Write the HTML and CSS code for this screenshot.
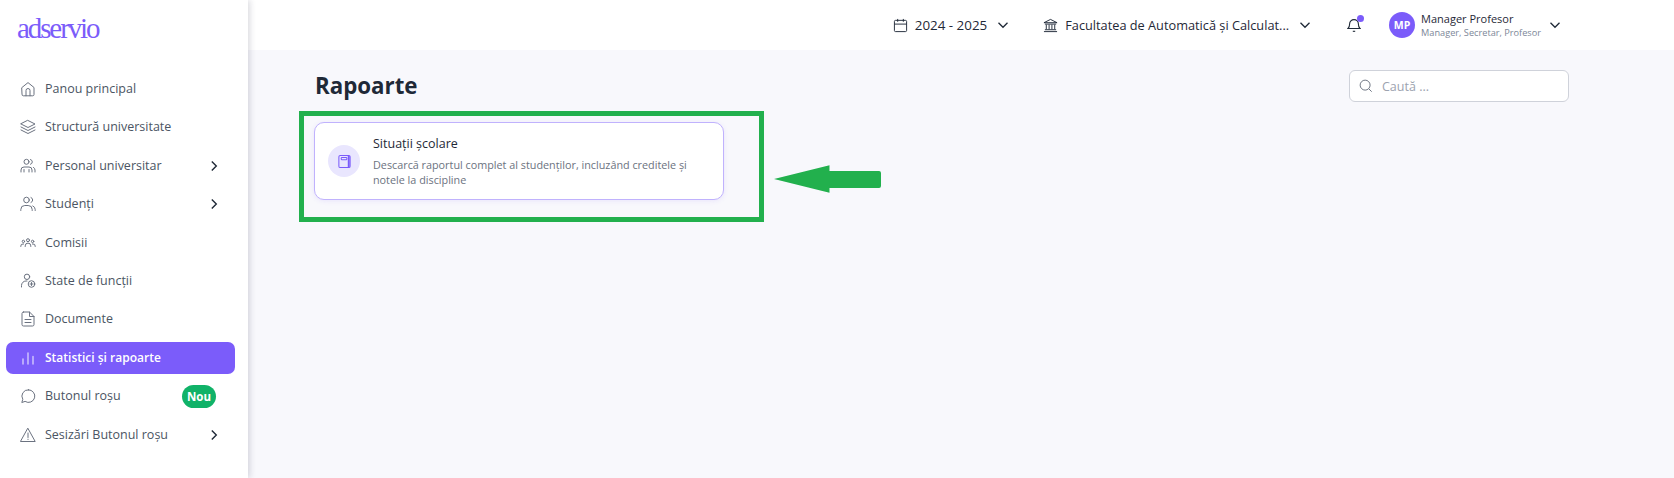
FILE: index.html
```html
<!DOCTYPE html>
<html lang="ro">
<head>
  <meta charset="UTF-8">
  <meta name="viewport" content="width=device-width, initial-scale=1.0">
  <title>Rapoarte</title>
  <link rel="stylesheet" href="styles.css">
</head>
<body>
  <div class="layout">
    <aside class="sidebar">
      <div class="logo">adservio</div>
      <nav class="nav">
        <a class="nav-item">
          <svg class="nav-icon" viewBox="0 0 16 16"><path d="M2 6.500 8 1.600l6 4.900v7a1.300 1.300 0 0 1-1.300 1.300H3.300A1.300 1.300 0 0 1 2 13.500z"/><path d="M6 14.800V9.500a2 2 0 0 1 4 0v5.300"/></svg>
          <span class="nav-label">Panou principal</span>
        </a>
        <a class="nav-item">
          <svg class="nav-icon" viewBox="0 0 16 16"><path d="M8 1.500 15 5 8 8.500 1 5z"/><path d="M1 8l7 3.500L15 8"/><path d="M1 11l7 3.500 7-3.500"/></svg>
          <span class="nav-label">Structură universitate</span>
        </a>
        <a class="nav-item">
          <svg class="nav-icon" viewBox="0 0 16 16"><circle cx="6.500" cy="3.800" r="2.500"/><path d="M10.500 1.500a2.500 2.500 0 0 1 0 4.800"/><path d="M1 14v-2a3 3 0 0 1 3-3h5a3 3 0 0 1 3 3v2"/><path d="M15 14v-2a3 3 0 0 0-1.500-2.600"/><path d="M4 11.500V14M9 11.500V14"/></svg>
          <span class="nav-label">Personal universitar</span>
          <svg class="nav-chevron" viewBox="0 0 8 12"><path d="M1.800 1.500 6.300 6l-4.500 4.500"/></svg>
        </a>
        <a class="nav-item">
          <svg class="nav-icon" viewBox="0 0 16 16"><circle cx="6.500" cy="4" r="2.800"/><path d="M11 1.500a2.700 2.700 0 0 1 0 5"/><path d="M.8 14.500v-1a4 4 0 0 1 4-4h3.400a4 4 0 0 1 4 4v1"/><path d="M15.200 14.500v-1a4 4 0 0 0-2.400-3.600"/></svg>
          <span class="nav-label">Studenți</span>
          <svg class="nav-chevron" viewBox="0 0 8 12"><path d="M1.800 1.500 6.300 6l-4.500 4.500"/></svg>
        </a>
        <a class="nav-item">
          <svg class="nav-icon" viewBox="0 0 16 16"><circle cx="8" cy="5.200" r="1.500"/><circle cx="3.400" cy="6.400" r="1.200"/><circle cx="12.600" cy="6.400" r="1.200"/><path d="M5.200 11.500v-.6a2.800 2.800 0 0 1 5.600 0v.6"/><path d="M.8 11.500v-.4A2.100 2.100 0 0 1 3 9h.6"/><path d="M15.200 11.500v-.4A2.100 2.100 0 0 0 13 9h-.6"/></svg>
          <span class="nav-label">Comisii</span>
        </a>
        <a class="nav-item">
          <svg class="nav-icon" viewBox="0 0 16 16"><circle cx="7" cy="3.800" r="2.700"/><path d="M1.500 14v-1.500A4.500 4.500 0 0 1 6 8h1"/><circle cx="11.500" cy="11" r="3.300"/><path d="M11.500 9.500v3M10 11h3"/></svg>
          <span class="nav-label">State de funcții</span>
        </a>
        <a class="nav-item">
          <svg class="nav-icon" viewBox="0 0 16 16"><path d="M3.500 1h6L14 5.500v8A1.500 1.500 0 0 1 12.500 15h-9A1.500 1.500 0 0 1 2 13.500v-11A1.500 1.500 0 0 1 3.500 1z"/><path d="M9.500 1v4.500H14"/><path d="M5 8.500h6M5 11.500h6"/></svg>
          <span class="nav-label">Documente</span>
        </a>
        <a class="nav-item active">
          <svg class="nav-icon" viewBox="0 0 16 16"><path d="M3 14V9M8 14V3M13 14V6.500"/></svg>
          <span class="nav-label">Statistici și rapoarte</span>
        </a>
        <a class="nav-item">
          <svg class="nav-icon" viewBox="0 0 16 16"><path d="M8.500 1.800a6.300 6.300 0 1 1-3.400 11.600L1.800 14.500l1-3.200A6.300 6.300 0 0 1 8.500 1.800z"/></svg>
          <span class="nav-label">Butonul roșu</span>
          <span class="badge">Nou</span>
        </a>
        <a class="nav-item">
          <svg class="nav-icon" viewBox="0 0 16 16"><path d="M8 1.500 15.200 14.500H.8z" stroke-linejoin="round"/><path d="M8 6v4.500M8 12.200v.3"/></svg>
          <span class="nav-label">Sesizări Butonul roșu</span>
          <svg class="nav-chevron" viewBox="0 0 8 12"><path d="M1.800 1.500 6.300 6l-4.500 4.500"/></svg>
        </a>
      </nav>
    </aside>

    <div class="content">
      <header class="topbar">
        <div class="top-select year">
          <svg class="top-icon" viewBox="0 0 16 16"><rect x="1.500" y="2.500" width="13" height="12" rx="1.200"/><path d="M1.500 6.500h13M5 1v3M11 1v3"/></svg>
          <span>2024 - 2025</span>
          <svg class="top-chevron" viewBox="0 0 12 8"><path d="M1.500 1.800 6 6.300l4.500-4.500"/></svg>
        </div>
        <div class="top-select faculty">
          <svg class="top-icon" viewBox="0 0 16 16"><path d="M1 5 8 1.500 15 5z"/><path d="M2 6.500h12M3.500 7v5M6.500 7v5M9.500 7v5M12.500 7v5M2 12.500h12M1 14.500h14"/></svg>
          <span>Facultatea de Automatică și Calculat...</span>
          <svg class="top-chevron" viewBox="0 0 12 8"><path d="M1.500 1.800 6 6.300l4.500-4.500"/></svg>
        </div>
        <div class="bell">
          <svg class="bell-icon" viewBox="0 0 14 16"><path d="M1 11.500c1.200-1 1.600-2 1.600-4.500a4.400 4.400 0 0 1 8.800 0c0 2.500.4 3.500 1.600 4.500z"/><path d="M5.800 14.300h2.400"/></svg>
          <span class="bell-dot"></span>
        </div>
        <div class="user">
          <span class="avatar">MP</span>
          <div class="user-text">
            <div class="user-name">Manager Profesor</div>
            <div class="user-roles">Manager, Secretar, Profesor</div>
          </div>
          <svg class="top-chevron user-chevron" viewBox="0 0 12 8"><path d="M1.500 1.800 6 6.300l4.500-4.500"/></svg>
        </div>
      </header>

      <main class="page">
        <div class="page-head">
          <h1>Rapoarte</h1>
          <div class="search">
            <svg class="search-icon" viewBox="0 0 16 16"><circle cx="7" cy="7" r="5.700"/><path d="m11.200 11.200 3.300 3.300"/></svg>
            <span>Caută ...</span>
          </div>
        </div>

        <div class="report-card">
          <div class="report-icon">
            <svg viewBox="0 0 16 16"><rect x="2" y="1.500" width="12" height="13" rx="1.500"/><rect x="4.500" y="3.800" width="6" height="2.400" rx=".8"/><path class="report-edge" d="M12.500 2v12"/></svg>
          </div>
          <div class="report-text">
            <div class="report-title">Situații școlare</div>
            <p>Descarcă raportul complet al studenților, incluzând creditele și notele la discipline</p>
          </div>
        </div>
      </main>
    </div>
  </div>

  <!-- adnotarile verzi de pe captura -->
  <div class="mark-box"></div>
  <svg class="mark-arrow" viewBox="0 0 108 28"><path d="M0 14 56 0v6h50q2 0 2 2v13q0 2-2 2H56v5z"/></svg>
</body>
</html>
```

FILE: styles.css
```css
* {
  box-sizing: border-box;
}
body {
  margin: 0;
  height: 478px;
  overflow: hidden;
  font-family: "Open Sans", "Noto Sans", Arial, sans-serif;
  background-color: #f8f8fc;
  color: #1f2937;
}
.layout {
  display: flex;
  height: 478px;
}

/* Sidebar */
.sidebar {
  width: 248px;
  flex-shrink: 0;
  background-color: #fff;
  box-shadow: 2px 0 6px rgba(30, 30, 60, 0.16);
  position: relative;
  z-index: 2;
}
.logo {
  height: 70px;
  padding: 12px 0 0 17px;
  font-family: "Liberation Serif", serif;
  font-size: 29px;
  letter-spacing: -2.100px;
  line-height: 32px;
  color: #7b5cfa;
}
.nav {
  display: flex;
  flex-direction: column;
  gap: 6.4px;
  padding: 3px 13px 0 6px;
}
.nav-item {
  display: flex;
  align-items: center;
  height: 32px;
  padding: 0 14px;
  border-radius: 7px;
  font-size: 12.500px;
  color: #4b5563;
}
.nav-icon {
  width: 16px;
  height: 16px;
  margin-right: 9px;
  flex-shrink: 0;
  fill: none;
  stroke: #6b7280;
  stroke-width: 1;
  stroke-linecap: round;
}
.nav-label {
  flex: 1;
  white-space: nowrap;
  padding-bottom: 1px;
}
.nav-chevron {
  width: 8px;
  height: 12px;
  margin-right: 3px;
  fill: none;
  stroke: #1f2937;
  stroke-width: 1.400;
}
.nav-item.active {
  background-color: #7b5cfa;
  color: #fff;
  font-weight: 600;
  font-size: 12px;
}
.active .nav-icon {
  stroke: #c9bcfd;
  stroke-width: 1.600;
}
.badge {
  margin-right: 5px;
  width: 34px;
  height: 23px;
  line-height: 23px;
  text-align: center;
  border-radius: 12px;
  background-color: #10b268;
  color: #fff;
  font-size: 11.500px;
  font-weight: 700;
}

/* Top bar */
.content {
  flex: 1;
  min-width: 0;
}
.topbar {
  display: flex;
  align-items: center;
  justify-content: flex-end;
  height: 50px;
  padding-right: 113px;
  background-color: #fff;
  color: #1f2937;
}
.top-select {
  display: flex;
  align-items: center;
}
.top-icon {
  width: 15px;
  height: 15px;
  margin-right: 7px;
  fill: none;
  stroke: #1f2937;
  stroke-width: 1;
}
.top-chevron {
  width: 12px;
  height: 8px;
  margin-left: 10px;
  fill: none;
  stroke: #1f2937;
  stroke-width: 1.300;
}
.user-chevron {
  margin-left: 8px;
}
.year {
  margin-right: 34px;
  font-size: 13.400px;
}
.faculty {
  margin-right: 36px;
  font-size: 12.750px;
}
.bell {
  position: relative;
  width: 14px;
  height: 16px;
  margin-right: 28px;
}
.bell-icon {
  display: block;
  width: 14px;
  height: 16px;
  fill: none;
  stroke: #1f2937;
  stroke-width: 1.100;
}
.bell-dot {
  position: absolute;
  top: -2px;
  right: -3px;
  width: 7px;
  height: 7px;
  border-radius: 50%;
  background-color: #7b5cfa;
}
.user {
  display: flex;
  align-items: center;
}
.avatar {
  width: 26px;
  height: 26px;
  margin-right: 6px;
  border-radius: 50%;
  background-color: #7b5cfa;
  color: #fff;
  font-size: 10.500px;
  font-weight: 700;
  line-height: 26px;
  text-align: center;
}
.user-name {
  font-size: 11px;
  line-height: 15px;
}
.user-roles {
  font-size: 9.200px;
  line-height: 13px;
  color: #7c8798;
}

/* Page */
.page {
  padding: 20px 105px 0 67px;
}
.page-head {
  display: flex;
  align-items: center;
  justify-content: space-between;
  height: 32px;
}
h1 {
  margin: -2px 0 0;
  font-size: 22.300px;
  font-weight: 700;
  color: #1f2937;
}
.search {
  display: flex;
  align-items: center;
  width: 220px;
  height: 32px;
  padding-left: 9px;
  border: 1px solid #cfd2da;
  border-radius: 6px;
  background-color: #fff;
  font-size: 12.500px;
  color: #9ca3af;
}
.search-icon {
  width: 14px;
  height: 14px;
  margin-right: 9px;
  fill: none;
  stroke: #6b7280;
  stroke-width: 1.100;
}
.report-card {
  display: flex;
  align-items: center;
  width: 410px;
  height: 78px;
  margin: 20px 0 0 -1px;
  padding: 0 12px 0 13px;
  border: 1px solid #c0b2fd;
  border-radius: 10px;
  background-color: #fff;
  box-shadow: 0 1px 5px rgba(123, 92, 250, 0.12);
}
.report-icon {
  display: flex;
  align-items: center;
  justify-content: center;
  width: 32px;
  height: 32px;
  margin-right: 13px;
  flex-shrink: 0;
  border-radius: 50%;
  background-color: #e9e6fe;
}
.report-icon svg {
  width: 15px;
  height: 15px;
  fill: none;
  stroke: #7b5cfa;
  stroke-width: 1.100;
}
.report-icon .report-edge {
  stroke-width: 2;
}
.report-title {
  font-size: 12.500px;
  line-height: 18px;
  color: #1f2937;
}
.report-text p {
  margin: 4px 0 0;
  font-size: 10.800px;
  line-height: 15px;
  color: #6b7280;
}

/* Adnotari */
.mark-box {
  position: absolute;
  left: 299px;
  top: 111px;
  width: 465px;
  height: 111px;
  border: 5px solid #22b04d;
}
.mark-arrow {
  position: absolute;
  left: 774px;
  top: 165px;
  width: 107px;
  height: 28px;
  fill: #22b04d;
}
```
